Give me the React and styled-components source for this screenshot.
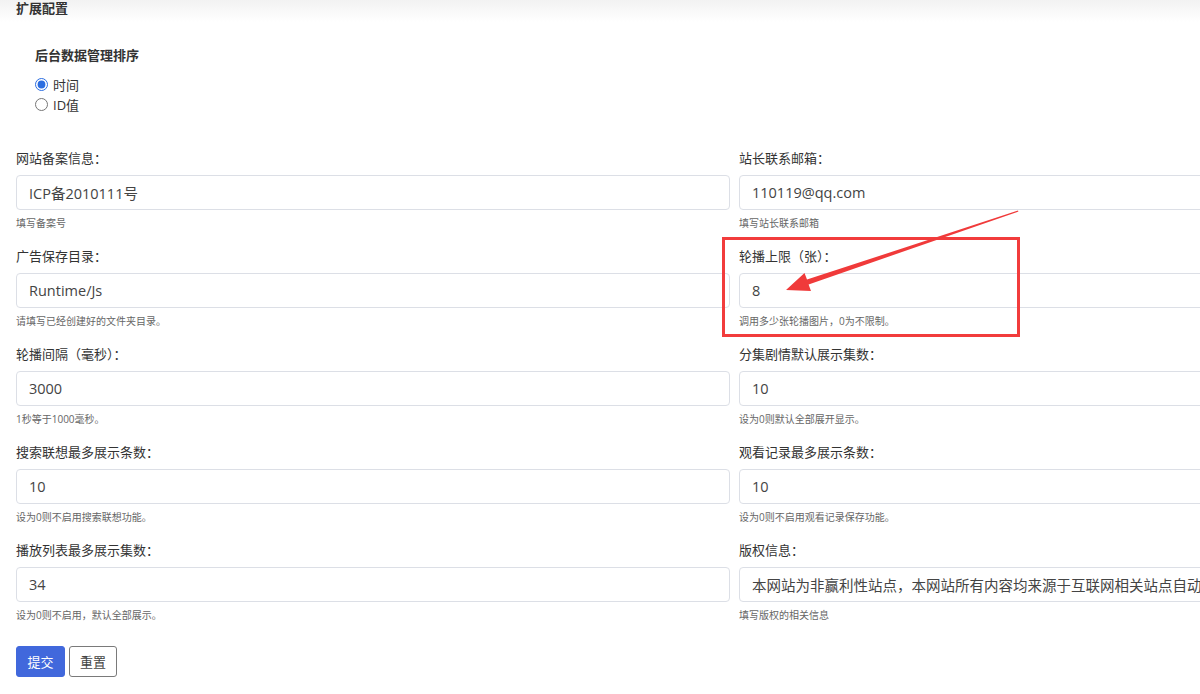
import styled, { createGlobalStyle } from "styled-components";

const GlobalStyle = createGlobalStyle`
body {
	margin: 0;
	background: #ffffff;
	overflow: hidden;
	font-family: "Open Sans", "Noto Sans CJK SC", sans-serif;
	color: #333333;
}
`;

const fields = [
	{ label: "网站备案信息：", value: "ICP备2010111号", help: "填写备案号" },
	{ label: "站长联系邮箱：", value: "110119@qq.com", help: "填写站长联系邮箱" },
	{ label: "广告保存目录：", value: "Runtime/Js", help: "请填写已经创建好的文件夹目录。" },
	{ label: "轮播上限（张）：", value: "8", help: "调用多少张轮播图片，0为不限制。" },
	{ label: "轮播间隔（毫秒）：", value: "3000", help: "1秒等于1000毫秒。" },
	{ label: "分集剧情默认展示集数：", value: "10", help: "设为0则默认全部展开显示。" },
	{ label: "搜索联想最多展示条数：", value: "10", help: "设为0则不启用搜索联想功能。" },
	{ label: "观看记录最多展示条数：", value: "10", help: "设为0则不启用观看记录保存功能。" },
	{ label: "播放列表最多展示集数：", value: "34", help: "设为0则不启用，默认全部展示。" },
	{
		label: "版权信息：",
		value: "本网站为非赢利性站点，本网站所有内容均来源于互联网相关站点自动搜索采集信息，相关链接已经注明来源。",
		help: "填写版权的相关信息",
	},
];

export default function App() {
	return (
		<Page>
			<GlobalStyle />
			<Header>扩展配置</Header>
			<Body>
				<SortBlock>
					<SectionTitle>后台数据管理排序</SectionTitle>
					<RadioList>
						<RadioRow>
							<Radio type="radio" name="sort" defaultChecked />
							时间
						</RadioRow>
						<RadioRow>
							<Radio type="radio" name="sort" />
							ID值
						</RadioRow>
					</RadioList>
				</SortBlock>
				<FormGrid>
					{fields.map((f) => (
						<Field key={f.label}>
							<Label>{f.label}</Label>
							<Input defaultValue={f.value} />
							<Help>{f.help}</Help>
						</Field>
					))}
				</FormGrid>
				<Actions>
					<Button primary>提交</Button>
					<Button>重置</Button>
				</Actions>
			</Body>
			<Highlight />
			<Arrow width="1200" height="694" viewBox="0 0 1200 694">
				<polygon
					points="786,290 804.5,273 807,279.6 1018,210.5 1018.4,211.6 808.6,284.4 811,291"
					fill="#f03a3a"
				/>
			</Arrow>
		</Page>
	);
}

const Page = styled.div`
	position: relative;
	width: 1460px;
	min-height: 694px;
`;

const Header = styled.div`
	height: 22px;
	padding-left: 16px;
	line-height: 17px;
	font-size: 13px;
	font-weight: 700;
	color: #333333;
	background: linear-gradient(to bottom, #f2f2f2, #ffffff);
`;

const Body = styled.div`
	padding: 23px 7px 0 16px;
`;

const SortBlock = styled.div`
	padding-left: 19px;
	margin-bottom: 34px;
`;

const SectionTitle = styled.div`
	font-size: 13px;
	font-weight: 700;
	line-height: 20px;
	color: #333333;
	margin-bottom: 9px;
`;

const RadioList = styled.div`
	display: flex;
	flex-direction: column;
`;

const RadioRow = styled.label`
	display: flex;
	align-items: center;
	gap: 5px;
	height: 20px;
	font-size: 13px;
	color: #333333;
`;

const Radio = styled.input`
	margin: 0;
	width: 13px;
	height: 13px;
	accent-color: #2b6de0;
`;

const FormGrid = styled.div`
	display: grid;
	grid-template-columns: 714px 714px;
	column-gap: 9px;
	row-gap: 14px;
`;

const Field = styled.div`
	display: flex;
	flex-direction: column;
`;

const Label = styled.div`
	font-size: 13px;
	line-height: 20px;
	color: #333333;
	margin-bottom: 7px;
`;

const Input = styled.input`
	box-sizing: border-box;
	height: 35px;
	width: 100%;
	padding: 0 12px;
	border: 1px solid #dcdfe6;
	border-radius: 4px;
	font-family: "Open Sans", "Noto Sans CJK SC", sans-serif;
	font-size: 14.5px;
	color: #444444;
	outline: none;
`;

const Help = styled.div`
	margin-top: 4px;
	font-size: 10px;
	line-height: 18px;
	color: #666666;
`;

const Actions = styled.div`
	display: flex;
	gap: 4px;
	margin-top: 22px;
`;

const Button = styled.button`
	box-sizing: border-box;
	height: 31px;
	width: ${(props) => (props.primary ? "49px" : "48px")};
	padding: 0;
	border-radius: 3px;
	border: 1px solid ${(props) => (props.primary ? "#4168dc" : "#7a7a7a")};
	background: ${(props) => (props.primary ? "#4168dc" : "#ffffff")};
	color: ${(props) => (props.primary ? "#ffffff" : "#444444")};
	font-family: "Noto Sans CJK SC", sans-serif;
	font-size: 13px;
	cursor: pointer;
`;

const Highlight = styled.div`
	position: absolute;
	left: 722px;
	top: 237px;
	width: 292px;
	height: 94px;
	border: 3px solid #f23c3c;
	pointer-events: none;
`;

const Arrow = styled.svg`
	position: absolute;
	left: 0;
	top: 0;
	pointer-events: none;
`;
